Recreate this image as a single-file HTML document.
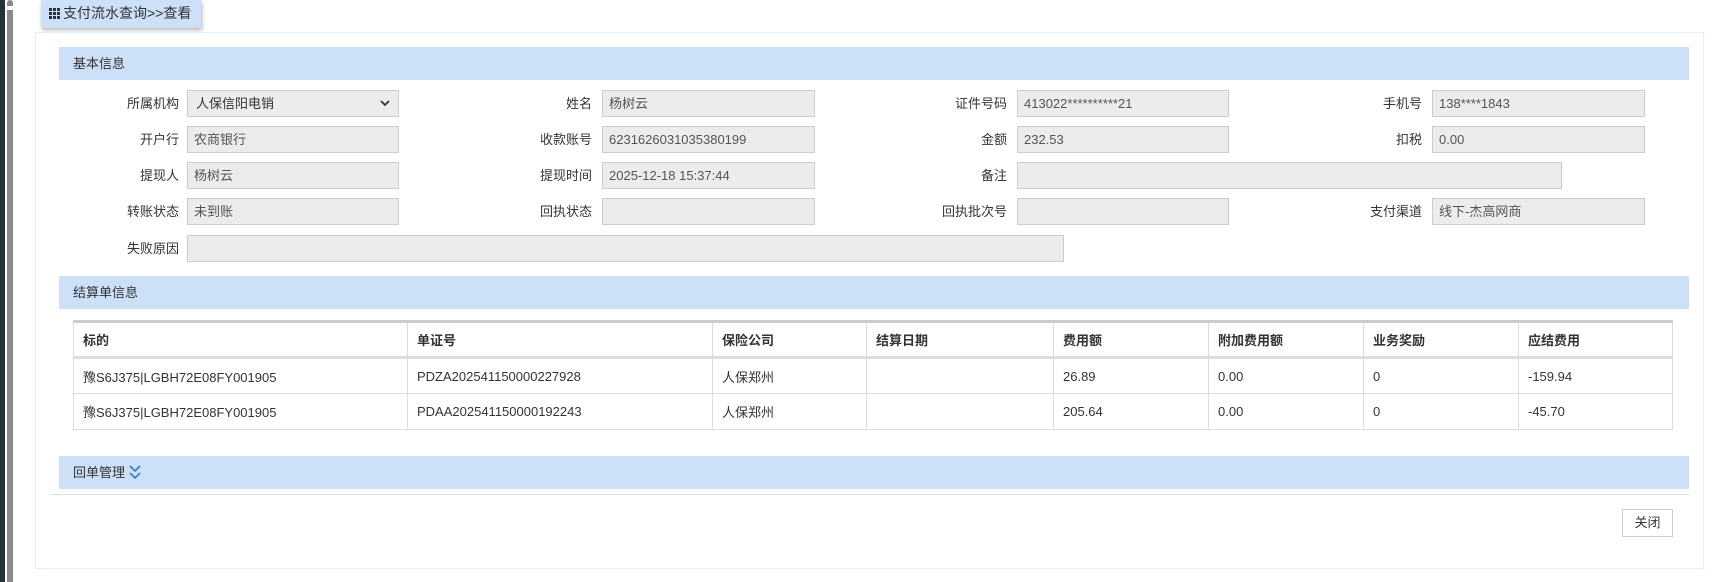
<!DOCTYPE html>
<html><head><meta charset="utf-8"><style>
*{box-sizing:border-box;margin:0;padding:0}
body{width:1719px;height:582px;background:#fff;font-family:"Liberation Sans","Noto Sans CJK SC",sans-serif;font-size:13px;color:#333;position:relative;overflow:hidden}
.abs{position:absolute}
.sb1{left:0;top:0;width:5px;height:582px;background:#263238}
.sb2{left:7px;top:10px;width:6px;height:572px;background:#8a8a8a}
.sbt{left:7px;top:0;width:6px;height:6px;background:#8a8a8a;border-radius:3px 3px 0 0}
.tab{left:41px;top:0;width:160px;height:28px;background:#cce0f8;box-shadow:1px 2px 4px rgba(0,0,0,.3);font-size:14px;line-height:26px;padding-left:8px}
.cont{left:35px;top:32px;width:1669px;height:537px;border:1px solid #e3eefa}
.band{left:59px;width:1630px;height:33px;background:#cce0f8;line-height:33px;padding-left:14px}
.lab{text-align:right;width:120px;line-height:27px}
.inp{height:27px;background:#ececec;border:1px solid #ccc;line-height:25px;padding-left:6px;color:#555}
table{position:absolute;left:73px;top:320px;width:1600px;border-collapse:collapse;border-top:3px solid #ccc}
td,th{border:1px solid #ddd;text-align:left;padding-left:9px;font-weight:normal;height:36px}
th{font-weight:bold;border-bottom:3px solid #ddd;height:36px}
.btn{left:1622px;top:509px;width:51px;height:28px;border:1px solid #ccc;text-align:center;line-height:26px}
</style></head><body>
<div class="abs sb1"></div><div class="abs sbt"></div><div class="abs sb2"></div>
<div class="abs tab"><span style="display:inline-block;width:11px;height:11px;vertical-align:-1px;margin-right:3px;background:
linear-gradient(90deg,#333 3px,transparent 3px,transparent 4px,#333 4px,#333 7px,transparent 7px,transparent 8px,#333 8px);
-webkit-mask:linear-gradient(#000 3px,transparent 3px,transparent 4px,#000 4px,#000 7px,transparent 7px,transparent 8px,#000 8px)"></span>支付流水查询&gt;&gt;查看</div>
<div class="abs cont"></div>
<div class="abs band" style="top:47px">基本信息</div>

<div class="abs lab" style="left:59px;top:90px">所属机构</div>
<div class="abs inp" style="left:187px;top:90px;width:212px;padding-left:8px;color:#333">人保信阳电销<svg style="position:absolute;right:8px;top:9px" width="10" height="7" viewBox="0 0 10 7"><path d="M1 1l4 4 4-4" fill="none" stroke="#333" stroke-width="1.8"/></svg></div>
<div class="abs lab" style="left:472px;top:90px">姓名</div>
<div class="abs inp" style="left:602px;top:90px;width:213px">杨树云</div>
<div class="abs lab" style="left:887px;top:90px">证件号码</div>
<div class="abs inp" style="left:1017px;top:90px;width:212px">413022**********21</div>
<div class="abs lab" style="left:1302px;top:90px">手机号</div>
<div class="abs inp" style="left:1432px;top:90px;width:213px">138****1843</div>

<div class="abs lab" style="left:59px;top:126px">开户行</div>
<div class="abs inp" style="left:187px;top:126px;width:212px">农商银行</div>
<div class="abs lab" style="left:472px;top:126px">收款账号</div>
<div class="abs inp" style="left:602px;top:126px;width:213px">6231626031035380199</div>
<div class="abs lab" style="left:887px;top:126px">金额</div>
<div class="abs inp" style="left:1017px;top:126px;width:212px">232.53</div>
<div class="abs lab" style="left:1302px;top:126px">扣税</div>
<div class="abs inp" style="left:1432px;top:126px;width:213px">0.00</div>

<div class="abs lab" style="left:59px;top:162px">提现人</div>
<div class="abs inp" style="left:187px;top:162px;width:212px">杨树云</div>
<div class="abs lab" style="left:472px;top:162px">提现时间</div>
<div class="abs inp" style="left:602px;top:162px;width:213px">2025-12-18 15:37:44</div>
<div class="abs lab" style="left:887px;top:162px">备注</div>
<div class="abs inp" style="left:1017px;top:162px;width:545px"></div>

<div class="abs lab" style="left:59px;top:198px">转账状态</div>
<div class="abs inp" style="left:187px;top:198px;width:212px">未到账</div>
<div class="abs lab" style="left:472px;top:198px">回执状态</div>
<div class="abs inp" style="left:602px;top:198px;width:213px"></div>
<div class="abs lab" style="left:887px;top:198px">回执批次号</div>
<div class="abs inp" style="left:1017px;top:198px;width:212px"></div>
<div class="abs lab" style="left:1302px;top:198px">支付渠道</div>
<div class="abs inp" style="left:1432px;top:198px;width:213px">线下-杰高网商</div>

<div class="abs lab" style="left:59px;top:235px">失败原因</div>
<div class="abs inp" style="left:187px;top:235px;width:877px"></div>

<div class="abs band" style="top:276px">结算单信息</div>
<table>
<tr><th style="width:334px">标的</th><th style="width:305px">单证号</th><th style="width:154px">保险公司</th><th style="width:187px">结算日期</th><th style="width:155px">费用额</th><th style="width:155px">附加费用额</th><th style="width:155px">业务奖励</th><th>应结费用</th></tr>
<tr><td>豫S6J375|LGBH72E08FY001905</td><td>PDZA202541150000227928</td><td>人保郑州</td><td></td><td>26.89</td><td>0.00</td><td>0</td><td>-159.94</td></tr>
<tr><td>豫S6J375|LGBH72E08FY001905</td><td>PDAA202541150000192243</td><td>人保郑州</td><td></td><td>205.64</td><td>0.00</td><td>0</td><td>-45.70</td></tr>
</table>
<div class="abs band" style="top:456px">回单管理 <svg width="12" height="16" style="vertical-align:-3px" viewBox="0 0 12 16"><path d="M1 2l5 5 5-5M1 9l5 5 5-5" fill="none" stroke="#3a78c9" stroke-width="1.6"/></svg></div>
<div class="abs" style="left:50px;top:494px;width:1639px;height:1px;background:#ddd"></div>
<div class="abs btn">关闭</div>
</body></html>
